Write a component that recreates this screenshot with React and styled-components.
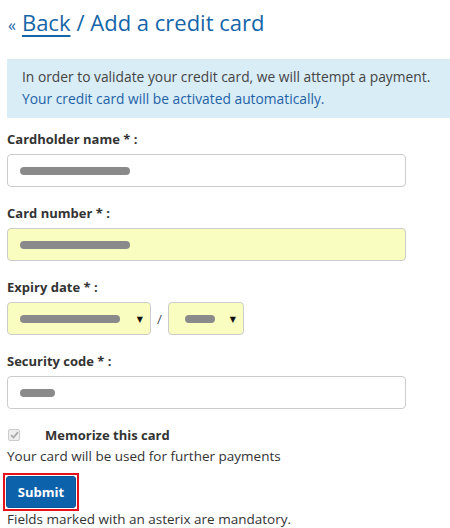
import React from "react";
import styled, { createGlobalStyle } from "styled-components";

const Global = createGlobalStyle`
  html, body { margin: 0; padding: 0; background: #fff; }
  body { font-family: "Open Sans", "DejaVu Sans", sans-serif; color: #333; }
`;

const Page = styled.div`
  padding: 0 0 0 7px;
  width: 443px;
  font-size: 13.5px;
`;

const Title = styled.h1`
  margin: 0;
  padding: 7px 0 0 1px;
  height: 59px;
  box-sizing: border-box;
  font-size: 22px;
  font-weight: normal;
  color: #1565a8;
  display: flex;
  align-items: baseline;
  gap: 6px;
`;

const Chev = styled.span`
  font-size: 16px;
`;

const BackLink = styled.a`
  color: #1565a8;
  text-decoration: underline;
  text-decoration-thickness: 2px;
  text-underline-offset: 4px;
`;

const Alert = styled.div`
  background: #d9edf7;
  padding: 7px 0 8px 15px;
  line-height: 22px;
  font-size: 13.8px;
  white-space: nowrap;
  overflow: hidden;
  margin-bottom: 10px;
`;

const Dark = styled.div`
  color: #444;
`;
const Blue = styled.div`
  color: #1f62a6;
`;

const Label = styled.div`
  font-weight: bold;
  font-size: 13px;
  color: #333;
  height: 22px;
  display: flex;
  align-items: center;
  margin-bottom: 4px;
`;

const Field = styled.div`
  margin-bottom: 15px;
`;

const Input = styled.div`
  box-sizing: border-box;
  width: ${(p) => p.$w || 399}px;
  height: 33px;
  border: 1px solid #ccc;
  border-radius: 4px;
  background: ${(p) => (p.$yellow ? "#fafdc0" : "#fff")};
  display: flex;
  align-items: center;
  padding: 0 ${(p) => p.$pr || 12}px 0 12px;
  justify-content: space-between;
`;

const Redact = styled.span`
  display: inline-block;
  height: 8px;
  width: ${(p) => p.$w}px;
  background: #8a8a8a;
  border-radius: 4px;
  margin-left: ${(p) => p.$ml || 0}px;
`;

const Row = styled.div`
  display: flex;
  align-items: center;
`;

const Slash = styled.span`
  width: 17px;
  text-align: center;
  color: #555;
`;

const Arrow = styled.span`
  font-size: 8px;
  color: #111;
`;

const CheckRow = styled.div`
  display: flex;
  align-items: center;
  margin-top: 4px;
  height: 22px;
`;

const Box = styled.span`
  box-sizing: border-box;
  width: 12px;
  height: 12px;
  border: 1px solid #ccc;
  background: #eee;
  border-radius: 2px;
  display: flex;
  align-items: center;
  justify-content: center;
  margin: 0 25px 0 1px;
`;

const CheckLabel = styled.span`
  font-weight: bold;
  font-size: 13px;
`;

const Help = styled.div`
  line-height: 20px;
`;

const SubmitWrap = styled.div`
  display: inline-block;
  border: 2px solid #e3121d;
  padding: 1px;
  margin: 7px 0 0 -4px;
  line-height: 0;
`;

const Submit = styled.button`
  width: 70px;
  height: 32px;
  background: #0d63ab;
  color: #fff;
  border: 1px solid #0a569a;
  border-radius: 3px;
  font: bold 13px "Open Sans", "DejaVu Sans", sans-serif;
`;

const Foot = styled.div`
  line-height: 16px;
`;

export default function App() {
  return (
    <>
      <Global />
      <Page>
        <Title>
          <Chev>«</Chev>
          <BackLink href="#">Back</BackLink>
          <span>/ Add a credit card</span>
        </Title>
        <Alert>
          <Dark>In order to validate your credit card, we will attempt a payment.</Dark>
          <Blue>Your credit card will be activated automatically.</Blue>
        </Alert>
        <Field>
          <Label>Cardholder name * :</Label>
          <Input>
            <Redact $w={110} />
          </Input>
        </Field>
        <Field>
          <Label>Card number * :</Label>
          <Input $yellow>
            <Redact $w={110} />
          </Input>
        </Field>
        <Field>
          <Label>Expiry date * :</Label>
          <Row>
            <Input $yellow $w={144} $pr={7}>
              <Redact $w={100} />
              <Arrow>▼</Arrow>
            </Input>
            <Slash>/</Slash>
            <Input $yellow $w={76} $pr={7}>
              <Redact $w={30} $ml={4} />
              <Arrow>▼</Arrow>
            </Input>
          </Row>
        </Field>
        <Field>
          <Label>Security code * :</Label>
          <Input>
            <Redact $w={35} />
          </Input>
        </Field>
        <CheckRow>
          <Box>
            <svg width="9" height="8" viewBox="0 0 9 8">
              <path d="M1 4.2 L3.5 6.5 L8 1.2" stroke="#aaa" strokeWidth="1.8" fill="none" />
            </svg>
          </Box>
          <CheckLabel>Memorize this card</CheckLabel>
        </CheckRow>
        <Help>Your card will be used for further payments</Help>
        <SubmitWrap>
          <Submit>Submit</Submit>
        </SubmitWrap>
        <Foot>Fields marked with an asterix are mandatory.</Foot>
      </Page>
    </>
  );
}
